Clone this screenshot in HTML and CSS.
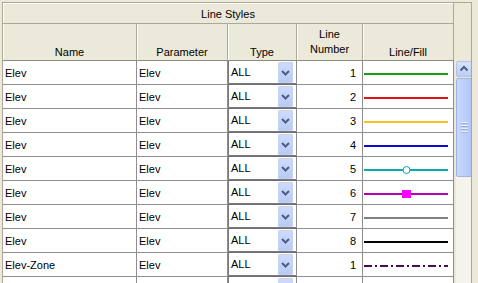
FILE: index.html
```html
<!DOCTYPE html>
<html lang="en">
<head>
    <meta charset="UTF-8">
    <title>Line Styles</title>
    <link rel="stylesheet" href="styles.css">
</head>
<body>
    <div class="window">
        <div class="grid">
            <div class="group-head">Line Styles</div>

            <div class="col-head">Name</div>
            <div class="col-head">Parameter</div>
            <div class="col-head">Type</div>
            <div class="col-head two-line">Line<br>Number</div>
            <div class="col-head">Line/Fill</div>

            <!-- row 1 -->
            <div class="cell">Elev</div>
            <div class="cell">Elev</div>
            <div class="cell combo-cell"><div class="combo"><span>ALL</span><span class="drop"><svg width="15" height="21"><path d="M4 9 L7.5 12.5 L11 9" /></svg></span></div></div>
            <div class="cell num">1</div>
            <div class="cell fill"><svg width="90" height="23"><line x1="1" y1="13" x2="85" y2="13" stroke="#1a9e1a" stroke-width="2"/></svg></div>

            <!-- row 2 -->
            <div class="cell">Elev</div>
            <div class="cell">Elev</div>
            <div class="cell combo-cell"><div class="combo"><span>ALL</span><span class="drop"><svg width="15" height="21"><path d="M4 9 L7.5 12.5 L11 9" /></svg></span></div></div>
            <div class="cell num">2</div>
            <div class="cell fill"><svg width="90" height="23"><line x1="1" y1="13" x2="85" y2="13" stroke="#e01414" stroke-width="2"/></svg></div>

            <!-- row 3 -->
            <div class="cell">Elev</div>
            <div class="cell">Elev</div>
            <div class="cell combo-cell"><div class="combo"><span>ALL</span><span class="drop"><svg width="15" height="21"><path d="M4 9 L7.5 12.5 L11 9" /></svg></span></div></div>
            <div class="cell num">3</div>
            <div class="cell fill"><svg width="90" height="23"><line x1="1" y1="13" x2="85" y2="13" stroke="#fbc21a" stroke-width="2"/></svg></div>

            <!-- row 4 -->
            <div class="cell">Elev</div>
            <div class="cell">Elev</div>
            <div class="cell combo-cell"><div class="combo"><span>ALL</span><span class="drop"><svg width="15" height="21"><path d="M4 9 L7.5 12.5 L11 9" /></svg></span></div></div>
            <div class="cell num">4</div>
            <div class="cell fill"><svg width="90" height="23"><line x1="1" y1="13" x2="85" y2="13" stroke="#0a0ad0" stroke-width="2"/></svg></div>

            <!-- row 5 -->
            <div class="cell">Elev</div>
            <div class="cell">Elev</div>
            <div class="cell combo-cell"><div class="combo"><span>ALL</span><span class="drop"><svg width="15" height="21"><path d="M4 9 L7.5 12.5 L11 9" /></svg></span></div></div>
            <div class="cell num">5</div>
            <div class="cell fill"><svg width="90" height="23"><line x1="1" y1="13" x2="85" y2="13" stroke="#0aa8b0" stroke-width="2"/><circle cx="43.5" cy="13" r="3.5" fill="#fff" stroke="#0aa8b0" stroke-width="1"/></svg></div>

            <!-- row 6 -->
            <div class="cell">Elev</div>
            <div class="cell">Elev</div>
            <div class="cell combo-cell"><div class="combo"><span>ALL</span><span class="drop"><svg width="15" height="21"><path d="M4 9 L7.5 12.5 L11 9" /></svg></span></div></div>
            <div class="cell num">6</div>
            <div class="cell fill"><svg width="90" height="23"><line x1="1" y1="13" x2="85" y2="13" stroke="#b400b4" stroke-width="2"/><rect x="39" y="9" width="9" height="8" fill="#ff00ff"/></svg></div>

            <!-- row 7 -->
            <div class="cell">Elev</div>
            <div class="cell">Elev</div>
            <div class="cell combo-cell"><div class="combo"><span>ALL</span><span class="drop"><svg width="15" height="21"><path d="M4 9 L7.5 12.5 L11 9" /></svg></span></div></div>
            <div class="cell num">7</div>
            <div class="cell fill"><svg width="90" height="23"><line x1="1" y1="13" x2="85" y2="13" stroke="#808080" stroke-width="2"/></svg></div>

            <!-- row 8 -->
            <div class="cell">Elev</div>
            <div class="cell">Elev</div>
            <div class="cell combo-cell"><div class="combo"><span>ALL</span><span class="drop"><svg width="15" height="21"><path d="M4 9 L7.5 12.5 L11 9" /></svg></span></div></div>
            <div class="cell num">8</div>
            <div class="cell fill"><svg width="90" height="23"><line x1="1" y1="13" x2="85" y2="13" stroke="#000" stroke-width="2"/></svg></div>

            <!-- row 9 -->
            <div class="cell">Elev-Zone</div>
            <div class="cell">Elev</div>
            <div class="cell combo-cell"><div class="combo"><span>ALL</span><span class="drop"><svg width="15" height="21"><path d="M4 9 L7.5 12.5 L11 9" /></svg></span></div></div>
            <div class="cell num">1</div>
            <div class="cell fill"><svg width="90" height="23"><line x1="1" y1="13" x2="85" y2="13" stroke="#4a0a4a" stroke-width="2" stroke-dasharray="8 3 2 3"/></svg></div>

            <!-- row 10 (cut off) -->
            <div class="cell"></div>
            <div class="cell"></div>
            <div class="cell combo-cell"><div class="combo"><span></span><span class="drop"></span></div></div>
            <div class="cell num"></div>
            <div class="cell fill"></div>
        </div>

        <div class="vscroll">
            <div class="sb-btn"><svg width="14" height="14"><path d="M3.5 8.5 L7 5 L10.5 8.5" /></svg></div>
            <div class="sb-thumb">
                <div class="grip"></div>
                <div class="grip"></div>
                <div class="grip"></div>
                <div class="grip"></div>
            </div>
            <div class="sb-track"></div>
        </div>
    </div>
</body>
</html>
```

FILE: styles.css
```css
body {
    margin: 0;
    width: 478px;
    height: 283px;
    overflow: hidden;
    background-color: #ece9d8;
    font-family: 'Liberation Sans', Arial, sans-serif;
    font-size: 11px;
    color: #000;
}

.window {
    display: flex;
    margin: 2px 0 0 2px;
    width: 468px;
    height: 281px;
    overflow: hidden;
    border-left: 1px solid #aca899;
    border-top: 1px solid #aca899;
    border-right: 1px solid #aca899;
}

.grid {
    display: grid;
    grid-template-columns: 134px 91px 69px 66px 91px;
    grid-auto-rows: 24px;
    grid-template-rows: 21px 37px;
    align-self: flex-start;
}

.group-head {
    grid-column: 1 / -1;
    display: flex;
    align-items: center;
    justify-content: center;
    padding-top: 1px;
    background-color: #ebe9d9;
    border-right: 1px solid #aca899;
    border-bottom: 1px solid #aca899;
    box-shadow: inset 1px 1px 0 #fff;
}

.col-head {
    display: flex;
    align-items: flex-end;
    justify-content: center;
    text-align: center;
    line-height: 15px;
    padding-bottom: 0;
    background-color: #ebe9d9;
    border-right: 1px solid #aca899;
    border-bottom: 1px solid #908d7c;
    box-shadow: inset 1px 0 0 #fff;
    box-sizing: border-box;
}

.col-head.two-line {
    padding-bottom: 3px;
}

.cell {
    display: flex;
    align-items: center;
    padding: 0 2px;
    background-color: #fff;
    border-right: 1px solid #8e8e8e;
    border-bottom: 1px solid #8e8e8e;
    box-sizing: border-box;
    white-space: nowrap;
}

.num {
    justify-content: flex-end;
    padding-right: 6px;
}

.fill {
    padding: 0;
    align-items: flex-start;
}

.combo-cell {
    padding: 0;
    border-bottom-color: #6e6e6e;
}

.combo {
    display: flex;
    align-items: center;
    width: 100%;
    height: 100%;
    padding-left: 2px;
    border-left: 1px solid #7a7a7a;
    border-bottom: 1px solid #7a7a7a;
    box-sizing: border-box;
}

.drop {
    margin-left: auto;
    margin-right: 3px;
    align-self: flex-start;
    margin-top: 1px;
    width: 15px;
    height: 21px;
    border-radius: 2px;
    background: linear-gradient(#cfdcfb, #b7caf6);
    box-shadow: inset 0 0 0 1px #c4d2f3;
}

.drop svg path,
.sb-btn svg path {
    fill: none;
    stroke: #4d6185;
    stroke-width: 2;
}

.vscroll {
    display: flex;
    flex-direction: column;
    width: 16px;
    margin-left: 2px;
    padding-top: 58px;
}

.sb-btn {
    display: flex;
    align-items: center;
    justify-content: center;
    height: 16px;
    box-sizing: border-box;
    border: 1px solid #b0c2ec;
    border-radius: 2px;
    background: linear-gradient(#d9e4fc, #bccdf7);
}

.sb-thumb {
    display: flex;
    flex-direction: column;
    align-items: center;
    justify-content: center;
    gap: 1px;
    height: 99px;
    margin-top: 1px;
    box-sizing: border-box;
    border: 1px solid #9fb4e6;
    border-radius: 2px;
    background: linear-gradient(90deg, #c9d8fc, #bccdf9 60%, #b3c6f5);
}

.grip {
    width: 7px;
    height: 1px;
    background-color: #e8eefd;
    border-bottom: 1px solid #9cb1e6;
}

.sb-track {
    flex: 1;
    background-color: #f4f3ec;
}
```
